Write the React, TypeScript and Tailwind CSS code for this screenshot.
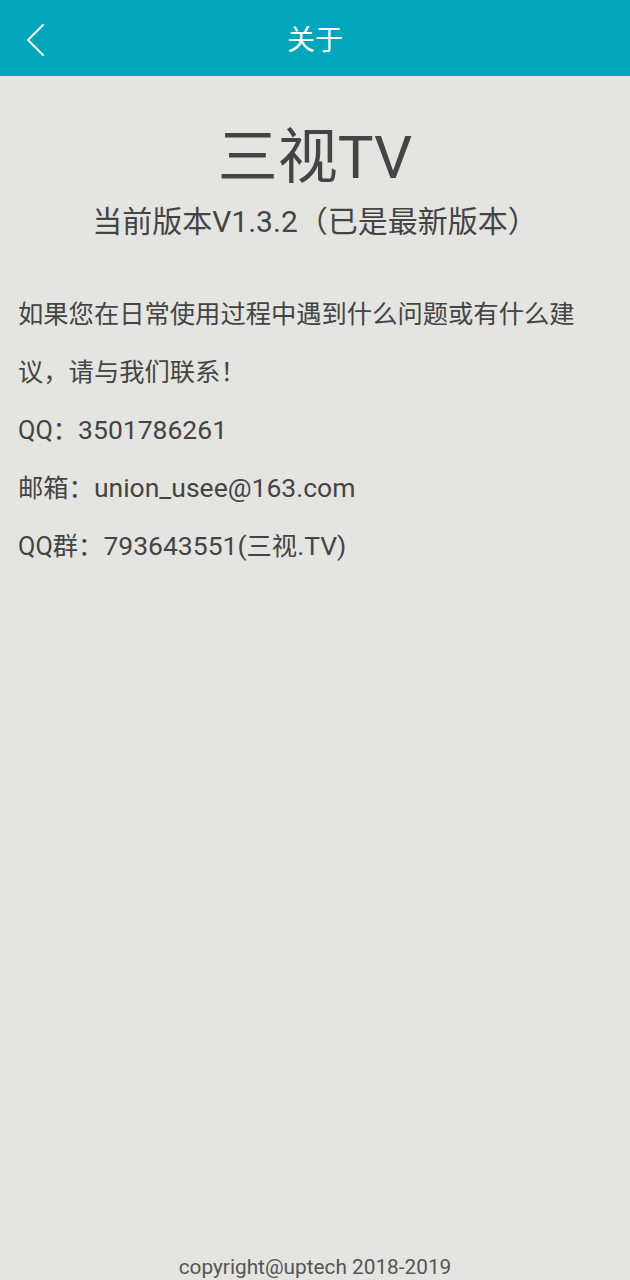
const font = '[font-family:Roboto,"Noto_Sans_CJK_SC",sans-serif]';

function BackIcon() {
  return (
    <svg width="22" height="34" viewBox="0 0 22 34" fill="none" className="block">
      <path d="M19 2 L4 17 L19 32" stroke="#ffffff" strokeWidth="2" strokeLinecap="round" strokeLinejoin="round" />
    </svg>
  );
}

function Num({ children }: { children: React.ReactNode }) {
  return <span className="text-[26.5px] leading-none">{children}</span>;
}

export default function App() {
  return (
    <div className={`flex min-h-[1280px] w-full flex-col bg-[#e4e4e1] ${font}`}>
      <header className="relative flex h-[76px] items-center justify-center bg-[#00a7bc]">
        <button className="absolute left-[24px] top-[23px]" aria-label="返回">
          <BackIcon />
        </button>
        <h1 className="mt-[5px] text-[28px] leading-none text-white">关于</h1>
      </header>

      <div className="mt-[47px] text-center text-[60px] leading-[70px] text-[#444444]">三视TV</div>
      <div className="mt-[9px] text-center text-[30px] leading-[40px] text-[#444444]">
        当前版本V1.3.2（已是最新版本）
      </div>

      <div className="mt-[44px] px-[18px] text-[25.3px] leading-[58px] text-[#444444]">
        <p className="w-[565px]">如果您在日常使用过程中遇到什么问题或有什么建议，请与我们联系！</p>
        <p>
          QQ：<Num>3501786261</Num>
        </p>
        <p>
          邮箱：<Num>union_usee@163.com</Num>
        </p>
        <p>
          QQ群：<Num>793643551(</Num>三视<Num>.TV)</Num>
        </p>
      </div>

      <footer className="mt-auto text-center text-[20.8px] leading-[26px] text-[#555555]">
        copyright@uptech 2018-2019
      </footer>
    </div>
  );
}
